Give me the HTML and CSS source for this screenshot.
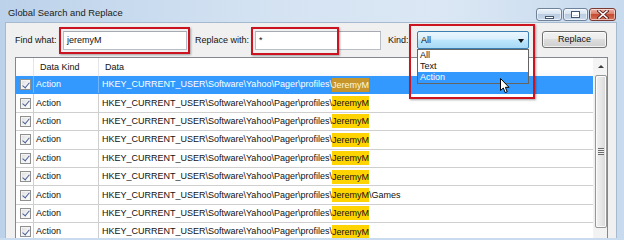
FILE: index.html
```html
<!DOCTYPE html>
<html>
<head>
<meta charset="utf-8">
<link rel="stylesheet" href="styles.css">
</head>
<body>
<div class="window">
  <div class="titlebar">
    <span class="title">Global Search and Replace</span>
    <div class="wbtns">
      <span class="wbtn min"><i></i></span>
      <span class="wbtn max"><i></i></span>
      <span class="wbtn close">
        <svg width="12" height="9" viewBox="0 0 12 9"><path d="M2 1 L10 8 M10 1 L2 8" stroke="#5a2020" stroke-width="3.2" stroke-linecap="square"/><path d="M2 1 L10 8 M10 1 L2 8" stroke="#fff" stroke-width="1.6" stroke-linecap="square"/></svg>
      </span>
    </div>
  </div>
  <div class="client">
    <div class="toolbar">
      <span class="lbl l1">Find what:</span>
      <div class="input i1">jeremyM</div>
      <span class="lbl l2">Replace with:</span>
      <div class="input i2">*</div>
      <span class="lbl l3">Kind:</span>
      <div class="combo">
        <span class="combo-text">All</span>
        <span class="arrow"></span>
        <ul class="dropdown">
          <li>All</li>
          <li>Text</li>
          <li class="sel">Action</li>
        </ul>
      </div>
      <div class="button">Replace</div>
    </div>
    <div class="list">
      <div class="grid">
        <div class="hdr">
          <span class="c1"></span>
          <span class="c2">Data Kind</span>
          <span class="c3">Data</span>
        </div>
        <div class="row selected">
          <span class="c1"><span class="cb"></span></span>
          <span class="c2">Action</span>
          <span class="c3">HKEY_CURRENT_USER\Software\Yahoo\Pager\profiles\<mark>JeremyM</mark></span>
        </div>
        <div class="row">
          <span class="c1"><span class="cb"></span></span>
          <span class="c2">Action</span>
          <span class="c3">HKEY_CURRENT_USER\Software\Yahoo\Pager\profiles\<mark>JeremyM</mark></span>
        </div>
        <div class="row">
          <span class="c1"><span class="cb"></span></span>
          <span class="c2">Action</span>
          <span class="c3">HKEY_CURRENT_USER\Software\Yahoo\Pager\profiles\<mark>JeremyM</mark></span>
        </div>
        <div class="row">
          <span class="c1"><span class="cb"></span></span>
          <span class="c2">Action</span>
          <span class="c3">HKEY_CURRENT_USER\Software\Yahoo\Pager\profiles\<mark>JeremyM</mark></span>
        </div>
        <div class="row">
          <span class="c1"><span class="cb"></span></span>
          <span class="c2">Action</span>
          <span class="c3">HKEY_CURRENT_USER\Software\Yahoo\Pager\profiles\<mark>JeremyM</mark></span>
        </div>
        <div class="row">
          <span class="c1"><span class="cb"></span></span>
          <span class="c2">Action</span>
          <span class="c3">HKEY_CURRENT_USER\Software\Yahoo\Pager\profiles\<mark>JeremyM</mark></span>
        </div>
        <div class="row">
          <span class="c1"><span class="cb"></span></span>
          <span class="c2">Action</span>
          <span class="c3">HKEY_CURRENT_USER\Software\Yahoo\Pager\profiles\<mark>JeremyM</mark>\Games</span>
        </div>
        <div class="row">
          <span class="c1"><span class="cb"></span></span>
          <span class="c2">Action</span>
          <span class="c3">HKEY_CURRENT_USER\Software\Yahoo\Pager\profiles\<mark>JeremyM</mark></span>
        </div>
        <div class="row">
          <span class="c1"><span class="cb"></span></span>
          <span class="c2">Action</span>
          <span class="c3">HKEY_CURRENT_USER\Software\Yahoo\Pager\profiles\<mark>JeremyM</mark></span>
        </div>
      </div>
      <div class="scrollbar">
        <div class="sb-up"><span class="up-arrow"></span></div>
        <div class="sb-thumb"><span class="grip"></span></div>
        <div class="sb-track"></div>
      </div>
    </div>
  </div>

  <div class="mark-box m1"></div>
  <div class="mark-box m2"></div>
  <div class="mark-box m3"></div>

  <svg class="cursor" width="11" height="16" viewBox="0 0 11 16">
    <path d="M0.5 0.5 L0.5 12.5 L3.3 10 L5.2 14.6 L7.2 13.8 L5.4 9.3 L9 9.3 Z" fill="#fff" stroke="#000" stroke-width="1" stroke-linejoin="miter"/>
  </svg>
</div>
</body>
</html>
```

FILE: styles.css
```css
* { box-sizing: border-box; }

html, body {
  margin: 0;
  padding: 0;
  width: 624px;
  height: 238px;
  overflow: hidden;
  background: #c9dbee;
  font-family: "Liberation Sans", Arial, sans-serif;
  font-size: 9px;
  color: #111;
}

.window {
  position: relative;
  width: 624px;
  height: 238px;
  overflow: hidden;
  background: linear-gradient(90deg, #bcd2ea 0%, #d3e2f2 40%, #dbe7f4 70%, #c7daee 100%);
  display: flex;
  flex-direction: column;
}

/* title bar */
.titlebar {
  height: 22px;
  flex: none;
  display: flex;
  align-items: flex-start;
  padding-left: 8px;
  padding-right: 8px;
}

.title {
  font-size: 9.4px;
  line-height: 12px;
  padding-top: 7px;
  color: #1b1b1b;
}

.wbtns {
  margin-left: auto;
  margin-top: 8px;
  display: flex;
  gap: 1px;
}

.wbtn {
  height: 13px;
  border: 1px solid #6f8299;
  border-radius: 3px;
  display: flex;
  align-items: center;
  justify-content: center;
  background: linear-gradient(#edf3fa 0%, #d8e4f1 45%, #bccde2 50%, #cbdaeb 100%);
  box-shadow: inset 0 0 0 1px rgba(255,255,255,0.55);
}

.wbtn.min { width: 26px; }
.wbtn.max { width: 25px; }
.wbtn.close {
  width: 27px;
  border-color: #7a3a33;
  background: linear-gradient(#edb0a2 0%, #d9826c 45%, #c54b32 50%, #d37256 100%);
}

.wbtn.min i {
  display: block;
  width: 9px;
  height: 3px;
  margin-top: 5px;
  background: #fff;
  border: 1px solid #44566e;
}

.wbtn.max i {
  display: block;
  width: 9px;
  height: 7px;
  border: 1px solid #44566e;
  box-shadow: inset 0 0 0 1px #fff, inset 0 2px 0 1px #fff;
  background: #c9d7e8;
}

/* client area */
.client {
  flex: 1;
  margin: 0 7px 0 5px;
  background: #f0f0f0;
  border: 1px solid #a6b9cf;
  border-bottom: none;
  padding: 8px 8px 0 9px;
  display: flex;
  flex-direction: column;
  min-height: 0;
}

.toolbar {
  display: flex;
  align-items: flex-start;
  height: 19px;
  flex: none;
}

.lbl {
  line-height: 19px;
  white-space: nowrap;
}

.l1 { width: 48px; }
.l2 { width: 60px; margin-left: 8px; }
.l3 { width: 29px; margin-left: 7px; }

.input {
  height: 19px;
  background: #fff;
  border: 1px solid #b9bdc6;
  border-top-color: #a6aab2;
  padding-left: 3px;
  line-height: 17px;
}

.i1 { width: 124px; }
.i2 { width: 126px; }

.combo {
  position: relative;
  width: 112px;
  height: 18px;
  border: 1px solid #3c7fb1;
  border-radius: 2px;
  background: linear-gradient(#eaf6fd 0%, #d9f0fc 45%, #bee6fd 50%, #a7d9f5 100%);
  display: flex;
  align-items: center;
  padding-left: 3px;
}

.combo-text { line-height: 16px; }

.arrow {
  position: absolute;
  right: 4px;
  top: 7px;
  width: 0;
  height: 0;
  border-left: 3.5px solid transparent;
  border-right: 3.5px solid transparent;
  border-top: 4px solid #111;
}

.dropdown {
  position: absolute;
  left: -1px;
  top: 17px;
  width: 112px;
  margin: 0;
  padding: 0;
  list-style: none;
  background: #fff;
  border: 1px solid #646464;
  z-index: 5;
}

.dropdown li {
  height: 11px;
  line-height: 11px;
  padding-left: 2px;
  color: #111;
}

.dropdown li.sel {
  background: #3399ff;
  color: #fff;
}

.button {
  margin-left: 13px;
  width: 65px;
  height: 17px;
  border: 1px solid #707070;
  border-radius: 3px;
  background: linear-gradient(#f2f2f2 0%, #ebebeb 45%, #dddddd 50%, #cfcfcf 100%);
  box-shadow: inset 0 0 0 1px rgba(255,255,255,0.7);
  display: flex;
  align-items: center;
  justify-content: center;
  line-height: 15px;
}

/* list */
.list {
  margin-top: 7px;
  flex: 1;
  min-height: 0;
  width: 593px;
  border: 1px solid #828790;
  border-bottom: none;
  background: #fff;
  display: flex;
  overflow: hidden;
}

.grid {
  flex: 1;
  min-width: 0;
}

.hdr, .row {
  display: flex;
  white-space: nowrap;
}

.hdr {
  height: 18px;
  line-height: 18px;
  background: linear-gradient(#ffffff 0%, #ffffff 60%, #f7f8fa 100%);
}

.hdr .c1 { width: 18px; border-right: 1px solid #e3e5e8; }
.hdr .c2 { width: 65px; border-right: 1px solid #e3e5e8; padding-left: 6px; }
.hdr .c3 { flex: 1; padding-left: 6px; }

.row {
  height: 18.4px;
  line-height: 17px;
  border-bottom: 1px solid #cfcfcf;
  align-items: center;
}

.row .c1 {
  width: 18px;
  height: 100%;
  border-right: 1px solid #cfcfcf;
  display: flex;
  align-items: center;
  padding-left: 4px;
}

.row .c2 {
  width: 65px;
  height: 100%;
  border-right: 1px solid #cfcfcf;
  padding-left: 2px;
  display: flex;
  align-items: center;
}

.row .c3 {
  flex: 1;
  padding-left: 3px;
  display: flex;
  align-items: center;
  height: 100%;
}

.cb {
  position: relative;
  display: block;
  width: 11px;
  height: 11px;
  border: 1px solid #8e8f8f;
  background: linear-gradient(135deg, #dcdcdc 0%, #f4f4f4 60%, #ffffff 100%);
  box-shadow: inset 0 0 0 1px #f4f4f4;
}

.cb::after {
  content: "";
  position: absolute;
  left: 2.5px;
  top: 0.5px;
  width: 3px;
  height: 6px;
  border-right: 1.6px solid #4a5f97;
  border-bottom: 1.6px solid #4a5f97;
  transform: rotate(40deg);
}

mark {
  background: #ffd400;
  color: #111;
  line-height: 14px;
  display: inline-block;
  padding: 0;
}

.row.selected {
  background: #3399ff;
  color: #fff;
  border-bottom-color: #3399ff;
}

.row.selected .c1,
.row.selected .c2 {
  border-right-color: #6fb6ff;
}

.row.selected mark {
  background: #c6962c;
  color: #fff6d8;
}

/* scrollbar */
.scrollbar {
  width: 14px;
  flex: none;
  display: flex;
  flex-direction: column;
  background: #eeeeee;
  border-left: 1px solid #f4f4f4;
}

.sb-up {
  height: 17px;
  flex: none;
  position: relative;
  background: #f4f4f4;
}

.up-arrow {
  position: absolute;
  left: 4px;
  top: 7px;
  width: 0;
  height: 0;
  border-left: 3px solid transparent;
  border-right: 3px solid transparent;
  border-bottom: 3px solid #3c3c3c;
}

.sb-thumb {
  height: 153px;
  flex: none;
  margin-left: 1px;
  border: 1px solid #979797;
  border-radius: 2px;
  background: linear-gradient(90deg, #f2f2f2 0%, #e6e6e6 50%, #d8d8d8 100%);
  box-shadow: inset 0 0 0 1px #fbfbfb;
  display: flex;
  align-items: center;
  justify-content: center;
}

.grip {
  display: block;
  width: 6px;
  height: 7px;
  background: repeating-linear-gradient(#6a6a6a 0 1px, #f0f0f0 1px 2px);
}

.sb-track {
  flex: 1;
  background: #f2f2f2;
}

/* red annotation rectangles */
.mark-box {
  position: absolute;
  border: 2px solid #cc1421;
  box-shadow: 1px 1px 2px rgba(0,0,0,0.35);
  pointer-events: none;
}

.m1 { left: 59px; top: 27px; width: 131px; height: 27px; }
.m2 { left: 251px; top: 27px; width: 88px; height: 28px; }
.m3 { left: 409px; top: 24px; width: 126px; height: 75px; z-index: 6; }

.cursor {
  position: absolute;
  left: 500px;
  top: 78px;
  z-index: 10;
}
```
